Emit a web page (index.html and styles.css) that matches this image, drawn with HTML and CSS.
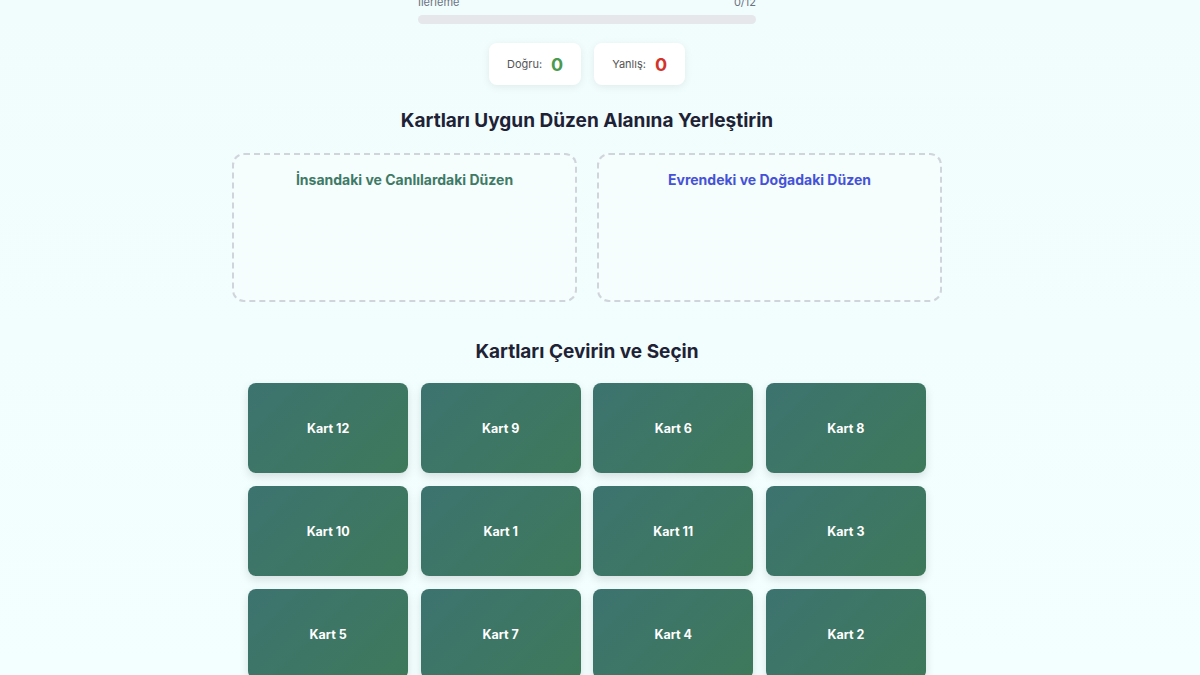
FILE: index.html
```html
<!DOCTYPE html>
<html lang="tr">
<head>
  <meta charset="UTF-8" />
  <title>Düzen Kartları</title>
  <link rel="stylesheet" href="styles.css">
</head>
<body>
  <div class="page">
    <div class="progress">
      <div class="progress-label">
        <span>İlerleme</span>
        <span id="progress-count">0/12</span>
      </div>
      <div class="progress-bar"><div class="progress-fill" id="progress-fill"></div></div>
    </div>

    <div class="scores">
      <div class="score-box">
        <span class="score-label">Doğru:</span>
        <span class="score-value correct" id="correct">0</span>
      </div>
      <div class="score-box">
        <span class="score-label">Yanlış:</span>
        <span class="score-value wrong" id="wrong">0</span>
      </div>
    </div>

    <h2 class="section-title">Kartları Uygun Düzen Alanına Yerleştirin</h2>
    <div class="zones">
      <div class="zone" data-type="canli">
        <h3 class="zone-title green">İnsandaki ve Canlılardaki Düzen</h3>
      </div>
      <div class="zone" data-type="evren">
        <h3 class="zone-title blue">Evrendeki ve Doğadaki Düzen</h3>
      </div>
    </div>

    <h2 class="section-title cards-title">Kartları Çevirin ve Seçin</h2>
    <div class="card-grid">
      <div class="card">Kart 12</div>
      <div class="card">Kart 9</div>
      <div class="card">Kart 6</div>
      <div class="card">Kart 8</div>
      <div class="card">Kart 10</div>
      <div class="card">Kart 1</div>
      <div class="card">Kart 11</div>
      <div class="card">Kart 3</div>
      <div class="card">Kart 5</div>
      <div class="card">Kart 7</div>
      <div class="card">Kart 4</div>
      <div class="card">Kart 2</div>
    </div>
  </div>
</body>
</html>
```

FILE: styles.css
```css
body {
  margin: 0;
  padding: 0;
  background: linear-gradient(180deg, #f1fcfd, #f3fefe);
  font-family: Inter, "Open Sans", sans-serif;
  height: 675px;
  overflow: hidden;
}
.page {
  width: 1174px;
  margin-top: -6px;
  display: flex;
  flex-direction: column;
  align-items: center;
}
.progress {
  width: 338px;
}
.progress-label {
  display: flex;
  justify-content: space-between;
  font-size: 11px;
  line-height: 16px;
  color: #6b7280;
  margin-bottom: 5px;
}
.progress-bar {
  height: 9px;
  border-radius: 5px;
  background-color: #e5e7eb;
  overflow: hidden;
}
.progress-fill {
  width: 0;
  height: 100%;
  background-color: #3e7a65;
}
.scores {
  display: flex;
  gap: 13px;
  margin-top: 19px;
}
.score-box {
  height: 42px;
  padding: 0 18px;
  display: flex;
  align-items: center;
  gap: 9px;
  background-color: #fff;
  border-radius: 8px;
  box-shadow: 0 2px 8px rgba(0, 0, 0, 0.07);
}
.score-label {
  font-size: 11px;
  color: #555;
}
.score-value {
  font-size: 18px;
  font-weight: bold;
}
.score-value.correct {
  color: #4a9a4f;
}
.score-value.wrong {
  color: #d2342c;
}
.section-title {
  margin: 22px 0 18px;
  font-size: 19px;
  line-height: 28px;
  font-weight: bold;
  color: #1e2235;
}
.cards-title {
  margin: 36px 0 17px;
}
.zones {
  display: grid;
  grid-template-columns: 345px 345px;
  gap: 20px;
}
.zone {
  height: 149px;
  box-sizing: border-box;
  border: 2px dashed #cfd5da;
  border-radius: 12px;
  background-color: rgba(255, 255, 255, 0.3);
  padding-top: 15px;
  text-align: center;
}
.zone-title {
  margin: 0;
  font-size: 14px;
  line-height: 20px;
  font-weight: bold;
}
.zone-title.green {
  color: #3e7a65;
}
.zone-title.blue {
  color: #4552d8;
}
.card-grid {
  display: grid;
  grid-template-columns: repeat(4, 160px);
  column-gap: 12.6px;
  row-gap: 13px;
}
.card {
  height: 90px;
  border-radius: 8px;
  background: linear-gradient(135deg, #3d736f, #3e795b);
  box-shadow: 0 4px 10px rgba(0, 0, 0, 0.12);
  color: #fff;
  font-size: 12.5px;
  font-weight: bold;
  display: flex;
  justify-content: center;
  align-items: center;
  cursor: pointer;
}
```
